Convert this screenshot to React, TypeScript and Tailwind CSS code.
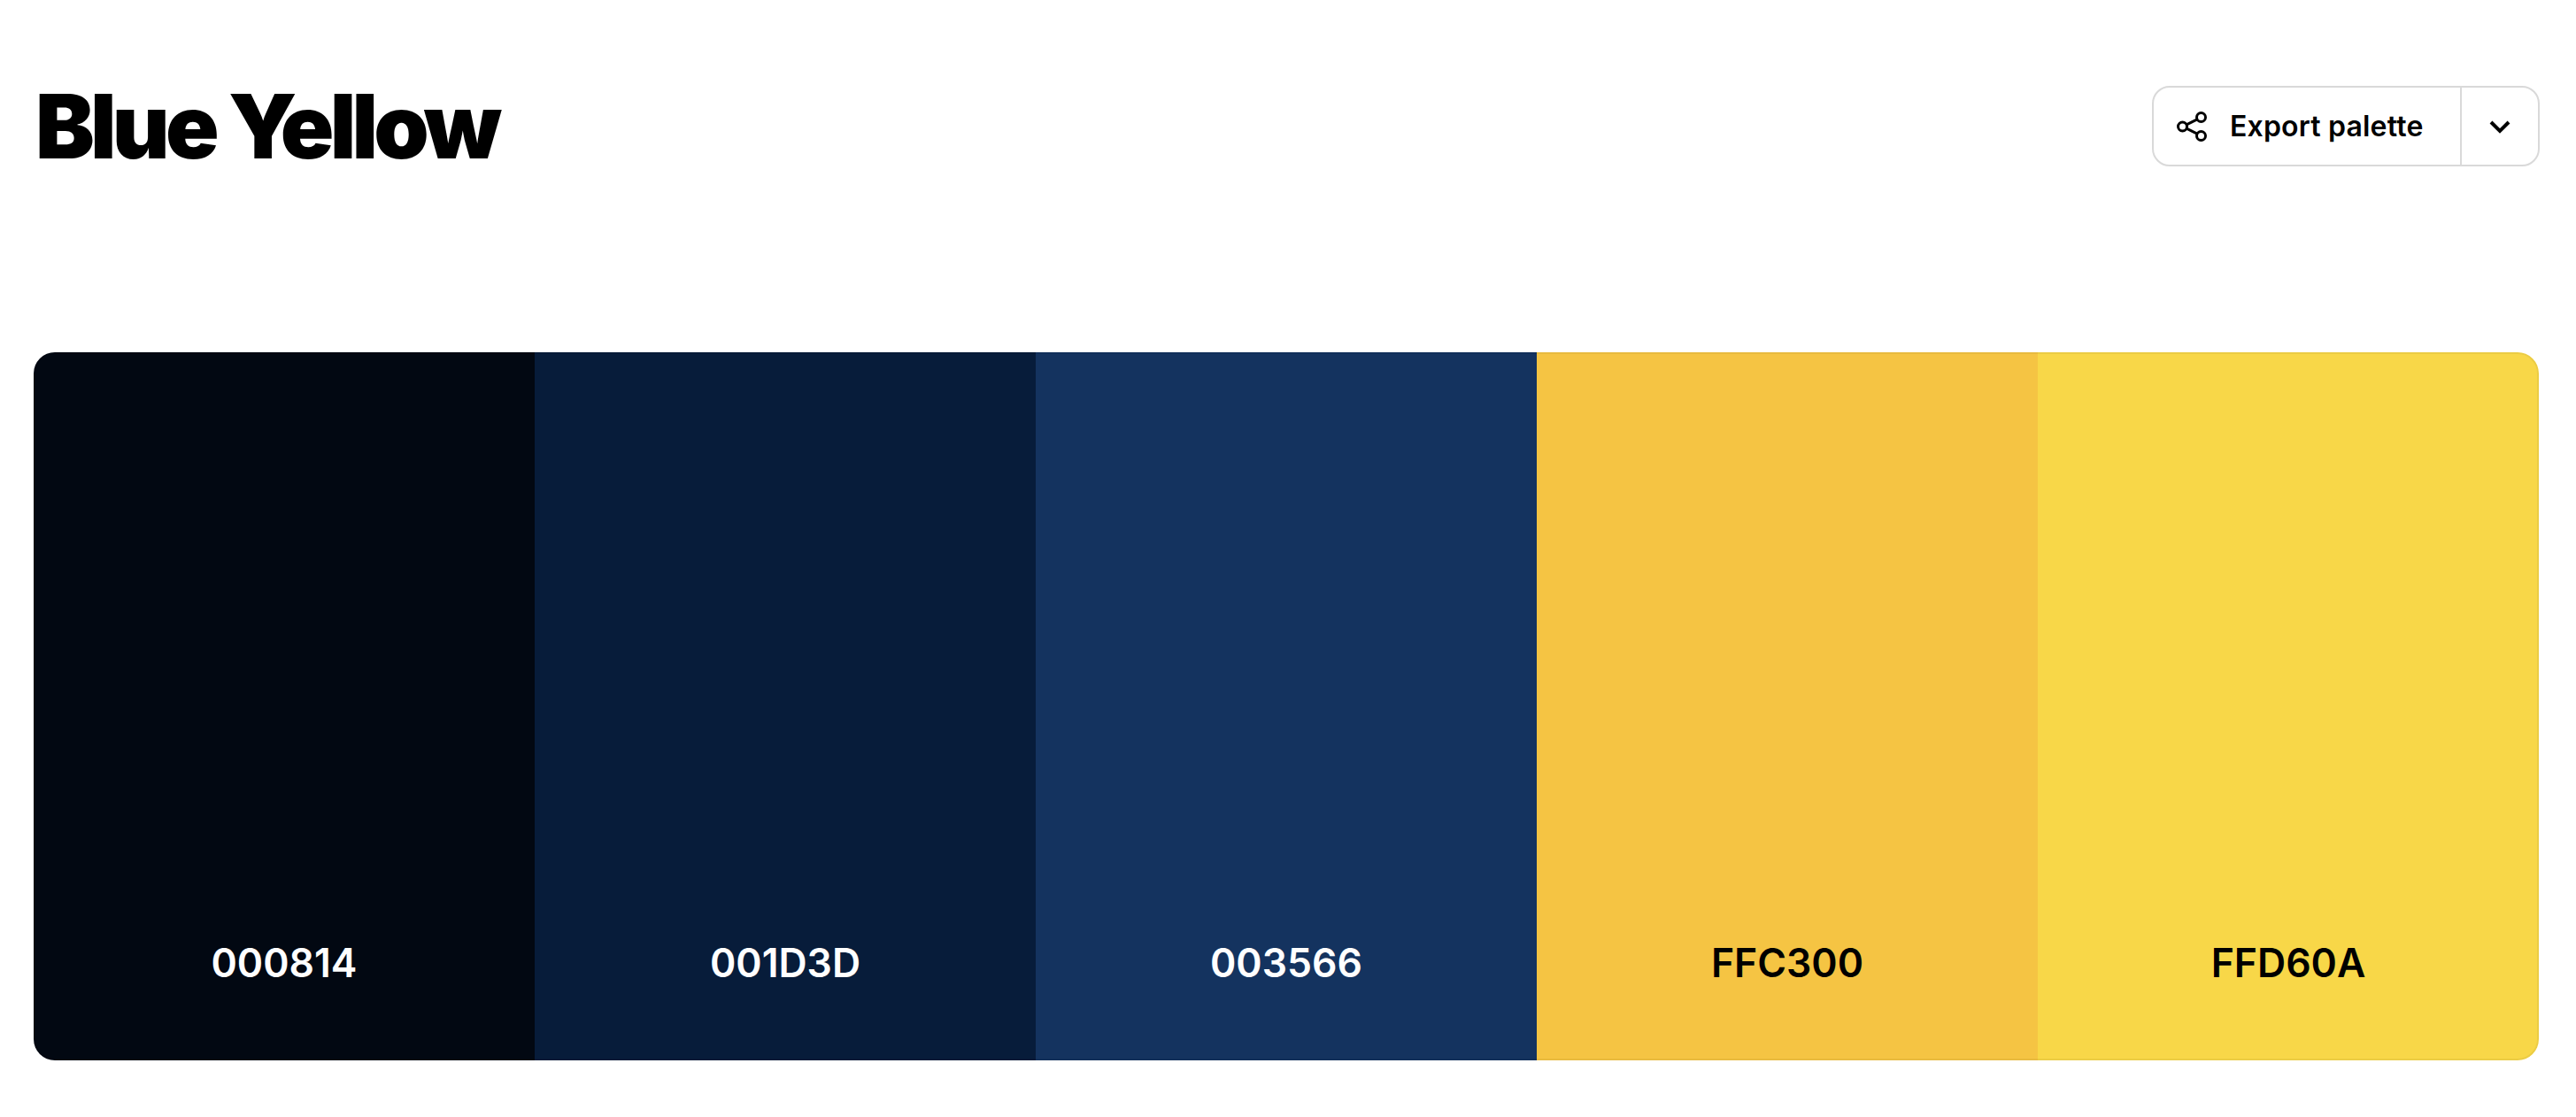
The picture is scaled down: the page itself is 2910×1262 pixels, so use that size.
const swatches = [
  { hex: "000814", bg: "bg-[#020812]", text: "text-white" },
  { hex: "001D3D", bg: "bg-[#071c3a]", text: "text-white" },
  { hex: "003566", bg: "bg-[#14335f]", text: "text-white" },
  { hex: "FFC300", bg: "bg-[#f5c443]", text: "text-black" },
  { hex: "FFD60A", bg: "bg-[#f8d748]", text: "text-black" },
];

export default function App() {
  return (
    <div className="min-h-[1262px] bg-white pr-[42px] pl-[38px] font-['Inter',sans-serif] text-black">
      <header className="flex h-[398px] items-start justify-between">
        <h1 className="mt-[83px] ml-[2px] text-[100px] leading-[120px] font-black tracking-[-0.048em]">Blue Yellow</h1>
        <div className="mt-[97px] -mr-[1px] flex h-[91px] w-[438px] rounded-[20px] border-2 border-[#d9d9d9]">
          <button className="flex flex-1 items-center border-r-2 border-[#d9d9d9] pl-[26px]">
            <svg width="34" height="34" viewBox="0 0 34 34" fill="none" stroke="#000" strokeWidth="3">
              <circle cx="6.5" cy="17" r="5" />
              <circle cx="27.5" cy="6.5" r="5" />
              <circle cx="27.5" cy="27.5" r="5" />
              <path d="M11 14.8 23 8.8M11 19.2 23 25.2" />
            </svg>
            <span className="ml-[26px] text-[32px] leading-none font-semibold tracking-[0.006em]">Export palette</span>
          </button>
          <button className="flex w-[86px] items-center justify-center">
            <svg width="24" height="16" viewBox="0 0 24 16" fill="none" stroke="#000" strokeWidth="4">
              <path d="M2 3 12 13 22 3" />
            </svg>
          </button>
        </div>
      </header>
      <section className="relative flex h-[800px] overflow-hidden rounded-[24px]">
        {swatches.map((s) => (
          <div key={s.hex} className={`flex flex-1 items-end justify-center pb-[83px] ${s.bg} ${s.text}`}>
            <span className="text-[44.5px] leading-[53px] font-semibold">{s.hex}</span>
          </div>
        ))}
        <div className="pointer-events-none absolute inset-0 rounded-[24px] border-2 border-black/5" />
      </section>
    </div>
  );
}
